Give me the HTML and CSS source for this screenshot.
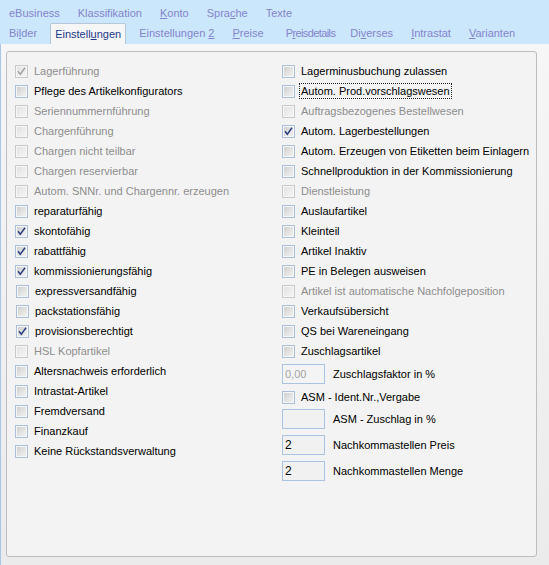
FILE: index.html
```html
<!DOCTYPE html>
<html lang="de">
<head>
<meta charset="utf-8">
<title>Einstellungen</title>
<link rel="stylesheet" href="styles.css">
</head>
<body>
<div class="tabs">
  <div class="trow">
    <span class="tab">eBusiness</span>
    <span class="tab">Klassifikation</span>
    <span class="tab"><u>K</u>onto</span>
    <span class="tab">Spra<u>c</u>he</span>
    <span class="tab">Texte</span>
  </div>
  <div class="trow trow2">
    <span class="tab">Bi<u>l</u>der</span>
    <span class="tab sel">Einstell<u>u</u>ngen</span>
    <span class="tab">Einstellungen <u>2</u></span>
    <span class="tab wide"><u>P</u>reise</span>
    <span class="tab tight">P<u>r</u>eisdetails</span>
    <span class="tab">Di<u>v</u>erses</span>
    <span class="tab"><u>I</u>ntrastat</span>
    <span class="tab"><u>V</u>arianten</span>
  </div>
</div>
<div class="panel">
  <div class="group">
    <div class="col">
      <div class="row dis"><span class="cb"><svg class="ck" viewBox="0 0 11 11"><path d="M2 5.3L4.3 8.2L9 1.8"/></svg></span><span class="lbl">Lagerführung</span></div>
      <div class="row"><span class="cb"></span><span class="lbl">Pflege des Artikelkonfigurators</span></div>
      <div class="row dis"><span class="cb"></span><span class="lbl">Seriennummernführung</span></div>
      <div class="row dis"><span class="cb"></span><span class="lbl">Chargenführung</span></div>
      <div class="row dis"><span class="cb"></span><span class="lbl">Chargen nicht teilbar</span></div>
      <div class="row dis"><span class="cb"></span><span class="lbl">Chargen reservierbar</span></div>
      <div class="row dis"><span class="cb"></span><span class="lbl">Autom. SNNr. und Chargennr. erzeugen</span></div>
      <div class="row"><span class="cb"></span><span class="lbl">reparaturfähig</span></div>
      <div class="row"><span class="cb"><svg class="ck" viewBox="0 0 11 11"><path d="M2 5.3L4.3 8.2L9 1.8"/></svg></span><span class="lbl">skontofähig</span></div>
      <div class="row"><span class="cb"><svg class="ck" viewBox="0 0 11 11"><path d="M2 5.3L4.3 8.2L9 1.8"/></svg></span><span class="lbl">rabattfähig</span></div>
      <div class="row"><span class="cb"><svg class="ck" viewBox="0 0 11 11"><path d="M2 5.3L4.3 8.2L9 1.8"/></svg></span><span class="lbl">kommissionierungsfähig</span></div>
      <div class="row shift"><span class="cb"></span><span class="lbl">expressversandfähig</span></div>
      <div class="row shift"><span class="cb"></span><span class="lbl">packstationsfähig</span></div>
      <div class="row shift"><span class="cb"><svg class="ck" viewBox="0 0 11 11"><path d="M2 5.3L4.3 8.2L9 1.8"/></svg></span><span class="lbl">provisionsberechtigt</span></div>
      <div class="row dis"><span class="cb"></span><span class="lbl">HSL Kopfartikel</span></div>
      <div class="row"><span class="cb"></span><span class="lbl">Altersnachweis erforderlich</span></div>
      <div class="row"><span class="cb"></span><span class="lbl">Intrastat-Artikel</span></div>
      <div class="row"><span class="cb"></span><span class="lbl">Fremdversand</span></div>
      <div class="row"><span class="cb"></span><span class="lbl">Finanzkauf</span></div>
      <div class="row"><span class="cb"></span><span class="lbl">Keine Rückstandsverwaltung</span></div>
    </div>
    <div class="col">
      <div class="row"><span class="cb"></span><span class="lbl">Lagerminusbuchung zulassen</span></div>
      <div class="row"><span class="cb"></span><span class="lbl focus">Autom. Prod.vorschlagswesen</span></div>
      <div class="row dis"><span class="cb"></span><span class="lbl">Auftragsbezogenes Bestellwesen</span></div>
      <div class="row"><span class="cb"><svg class="ck" viewBox="0 0 11 11"><path d="M2 5.3L4.3 8.2L9 1.8"/></svg></span><span class="lbl">Autom. Lagerbestellungen</span></div>
      <div class="row"><span class="cb"></span><span class="lbl">Autom. Erzeugen von Etiketten beim Einlagern</span></div>
      <div class="row"><span class="cb"></span><span class="lbl">Schnellproduktion in der Kommissionierung</span></div>
      <div class="row dis"><span class="cb"></span><span class="lbl">Dienstleistung</span></div>
      <div class="row"><span class="cb"></span><span class="lbl">Auslaufartikel</span></div>
      <div class="row"><span class="cb"></span><span class="lbl">Kleinteil</span></div>
      <div class="row"><span class="cb"></span><span class="lbl">Artikel Inaktiv</span></div>
      <div class="row"><span class="cb"></span><span class="lbl">PE in Belegen ausweisen</span></div>
      <div class="row dis"><span class="cb"></span><span class="lbl">Artikel ist automatische Nachfolgeposition</span></div>
      <div class="row"><span class="cb"></span><span class="lbl">Verkaufsübersicht</span></div>
      <div class="row"><span class="cb"></span><span class="lbl">QS bei Wareneingang</span></div>
      <div class="row"><span class="cb"></span><span class="lbl">Zuschlagsartikel</span></div>
      <div class="frow m3"><span class="tb dis">0,00</span><span class="lbl">Zuschlagsfaktor in %</span></div>
      <div class="row m3"><span class="cb"></span><span class="lbl">ASM - Ident.Nr.,Vergabe</span></div>
      <div class="frow m2"><span class="tb"></span><span class="lbl">ASM - Zuschlag in %</span></div>
      <div class="frow m6"><span class="tb">2</span><span class="lbl">Nachkommastellen Preis</span></div>
      <div class="frow m6"><span class="tb">2</span><span class="lbl">Nachkommastellen Menge</span></div>
    </div>
  </div>
</div>
</body>
</html>
```
FILE: styles.css
```css
html, body {
  margin: 0;
  padding: 0;
}
body {
  width: 549px;
  height: 565px;
  overflow: hidden;
  font-family: "Liberation Sans", Arial, sans-serif;
  font-size: 11px;
  background: #efefef;
  color: #000;
}
.tabs {
  background: #cbe7fc;
  padding-top: 3px;
  height: 44px;
  box-sizing: border-box;
}
.trow {
  display: flex;
  height: 20px;
  line-height: 20px;
  color: #8484cc;
  white-space: nowrap;
}
.trow2 {
  height: 21px;
  line-height: 21px;
}
.tab {
  padding: 0 9px;
}
.tab u {
  text-decoration: underline;
}
.tab.wide {
  margin-right: 4px;
}
.tab.tight {
  letter-spacing: -0.6px;
  padding-right: 6px;
}
.tab.sel {
  background: #f6f6f6;
  border: 1px solid #b7c7d9;
  border-bottom: none;
  border-radius: 2px 2px 0 0;
  padding: 0 4px;
  margin: 0 4px;
  line-height: 20px;
  color: #1b3a8c;
}
.panel {
  height: 521px;
  box-sizing: border-box;
  border-left: 1px solid #a9c5e8;
  padding: 7px 12px 8px 5px;
  background: linear-gradient(#f6f6f6, #ebebeb);
}
.group {
  height: 506px;
  box-sizing: border-box;
  border: 1px solid #bdbdbd;
  border-radius: 3px;
  background: #f3f3f3;
  padding: 9px 0 0 8px;
  display: grid;
  grid-template-columns: 267px 1fr;
  align-items: start;
}
.col {
  display: flex;
  flex-direction: column;
}
.row {
  display: flex;
  align-items: center;
  height: 20px;
  gap: 6px;
  white-space: nowrap;
}
.row.shift {
  padding-left: 1px;
}
.row.dis .lbl {
  color: #8d8d8d;
}
.cb {
  display: block;
  flex: none;
  width: 13px;
  height: 13px;
  box-sizing: border-box;
  border: 1px solid #abbfda;
  background: linear-gradient(135deg, #cbcbcb 0%, #e4e4e4 55%, #f2f2f2 100%);
  box-shadow: inset 0 0 0 1px #f6f6f6;
}
.row.dis .cb {
  border-color: #c9c9c9;
  background: linear-gradient(135deg, #e0e0e0 0%, #ededed 55%, #f5f5f5 100%);
}
.ck {
  display: block;
  width: 11px;
  height: 11px;
}
.ck path {
  fill: none;
  stroke: #2c3f80;
  stroke-width: 1.5;
}
.row.dis .ck path {
  stroke: #a4a4a4;
}
.focus {
  outline: 1px dotted #222;
  padding: 0 1px;
  margin-left: -1px;
  line-height: 14px;
}
.frow {
  display: flex;
  align-items: center;
  height: 20px;
  gap: 8px;
  white-space: nowrap;
}
.tb {
  display: block;
  flex: none;
  width: 43px;
  height: 20px;
  box-sizing: border-box;
  border: 1px solid #aac3e3;
  background: #f1f1f1;
  padding-left: 2px;
  line-height: 18px;
  font-size: 12px;
}
.tb.dis {
  color: #a3a3a3;
  font-size: 11px;
  background: #f4f4f4;
}
.m2 { margin-top: 2px; }
.m3 { margin-top: 3px; }
.m6 { margin-top: 6px; }
```
